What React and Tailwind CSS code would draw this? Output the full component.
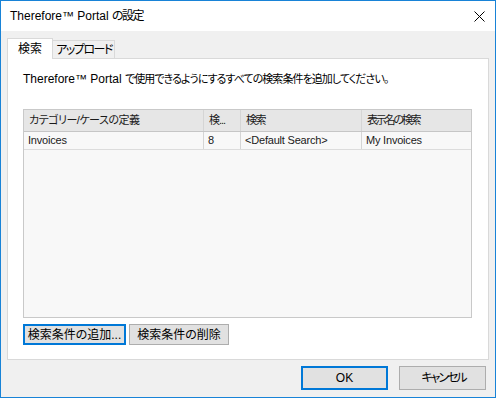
import React from 'react';

const cols = 'grid grid-cols-[180px_37px_121px_1fr]';

const HeaderCell = ({ children, last, track = '' }) => (
    <div className={`h-[21px] flex items-center pl-[5px] text-[11px] ${track} ${last ? '' : 'border-r border-[#d5d5d5]'} whitespace-nowrap overflow-hidden`}>
        {children}
    </div>
);

const Cell = ({ children, last }) => (
    <div className={`h-[17px] flex items-center pl-[4px] text-[11px] tracking-[-0.2px] ${last ? '' : 'border-r border-[#d5d5d5]'} whitespace-nowrap overflow-hidden`}>
        {children}
    </div>
);

export default function App() {
    return (
        <div className="w-[496px] h-[398px] border border-[#1883d7] flex flex-col bg-[#f0f0f0] text-[12px] text-black font-['Liberation_Sans','Noto_Sans_CJK_JP',sans-serif] [font-feature-settings:'palt'] leading-none">
            {/* title bar */}
            <div className="h-[30px] bg-white flex items-center justify-between pl-[9px] pr-[9px]">
                <span className="whitespace-nowrap">
                    Therefore™ Portal <span className="tracking-[-1.5px]">の設定</span>
                </span>
                <svg width="11" height="11" viewBox="0 0 11 11" className="mr-[1px]">
                    <path d="M0.5 0.5 L10.5 10.5 M10.5 0.5 L0.5 10.5" stroke="#000" strokeWidth="1" />
                </svg>
            </div>

            <div className="flex-1 flex flex-col px-[6px] pt-[7px]">
                {/* tabs */}
                <div className="flex items-end h-[20px]">
                    <div className="relative z-10 h-[21px] -mb-px w-[46px] bg-white border border-b-0 border-[#d9d9d9] flex items-center justify-center pb-[1px] whitespace-nowrap">
                        検索
                    </div>
                    <div className="h-[18px] w-[62px] bg-[#f0f0f0] border border-b-0 border-l-0 border-[#d9d9d9] flex items-center justify-center pl-[1px] whitespace-nowrap tracking-[-1.5px]">
                        アップロード
                    </div>
                </div>

                {/* panel */}
                <div className="h-[302px] bg-white border border-[#d9d9d9] flex flex-col pl-[15px] pr-[16px]">
                    <div className="mt-[14px] h-[12px] flex items-center whitespace-nowrap">
                        Therefore™ Portal&nbsp;
                        <span className="text-[11px] tracking-[-0.95px]">で使用できるようにするすべての検索条件を追加してください。</span>
                    </div>

                    <div className="mt-[24px] h-[209px] border border-[#c9c9c9] bg-[#f8f8f8] flex flex-col">
                        <div className={`${cols} bg-[#e6e6e6] border-b border-[#c6c6c6] text-[#1a1a1a]`}>
                            <HeaderCell track="tracking-[-0.5px]">カテゴリー/ケースの定義</HeaderCell>
                            <HeaderCell track="tracking-[-1px]">検...</HeaderCell>
                            <HeaderCell track="tracking-[-1.5px]">検索</HeaderCell>
                            <HeaderCell last track="tracking-[-2.2px]">表示名の検索</HeaderCell>
                        </div>
                        <div className={`${cols} border-b border-[#dcdcdc] text-[#1a1a1a]`}>
                            <Cell>Invoices</Cell>
                            <Cell>8</Cell>
                            <Cell>&lt;Default Search&gt;</Cell>
                            <Cell last>My Invoices</Cell>
                        </div>
                    </div>

                    <div className="mt-[6px] flex gap-[3px]">
                        <button className="h-[21px] w-[103px] border-2 border-[#0078d7] bg-[#e1e1e1] flex items-center justify-center whitespace-nowrap">
                            検索条件の追加...
                        </button>
                        <button className="h-[21px] w-[100px] border border-[#adadad] bg-[#e1e1e1] flex items-center justify-center whitespace-nowrap">
                            検索条件の削除
                        </button>
                    </div>
                </div>

                {/* footer buttons */}
                <div className="flex justify-end gap-[11px] mt-[6px] pr-[3px]">
                    <button className="h-[24px] w-[87px] border-2 border-[#0078d7] bg-[#e1e1e1] flex items-center justify-center">
                        OK
                    </button>
                    <button className="h-[24px] w-[87px] border border-[#adadad] bg-[#e1e1e1] flex items-center justify-center pl-[2px] tracking-[-2px] whitespace-nowrap">
                        キャンセル
                    </button>
                </div>
            </div>
        </div>
    );
}
